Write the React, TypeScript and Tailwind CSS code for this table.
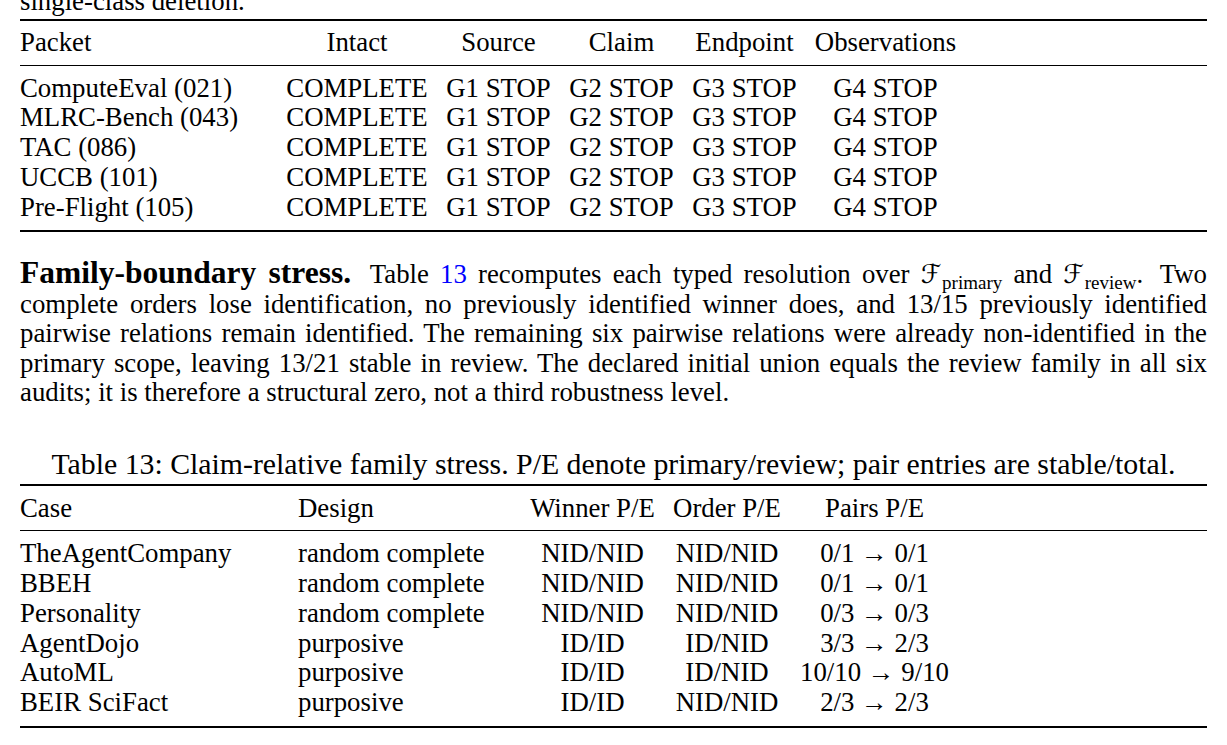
import React from "react";

const t1Cols = "grid grid-cols-[257px_160px_123px_123px_123px_159px_1fr]";
const t2Cols = "grid grid-cols-[278px_223px_143px_126px_169px_1fr]";

const t1Rows = [
  "ComputeEval (021)",
  "MLRC-Bench (043)",
  "TAC (086)",
  "UCCB (101)",
  "Pre-Flight (105)",
];

const t2Rows: [string, string, string, string, string][] = [
  ["TheAgentCompany", "random complete", "NID/NID", "NID/NID", "0/1 \u2192 0/1"],
  ["BBEH", "random complete", "NID/NID", "NID/NID", "0/1 \u2192 0/1"],
  ["Personality", "random complete", "NID/NID", "NID/NID", "0/3 \u2192 0/3"],
  ["AgentDojo", "purposive", "ID/ID", "ID/NID", "3/3 \u2192 2/3"],
  ["AutoML", "purposive", "ID/ID", "ID/NID", "10/10 \u2192 9/10"],
  ["BEIR SciFact", "purposive", "ID/ID", "NID/NID", "2/3 \u2192 2/3"],
];

function Heavy({ className = "" }: { className?: string }) {
  return <div className={"h-[2px] bg-black " + className} />;
}
function Light({ className = "" }: { className?: string }) {
  return <div className={"h-[1px] bg-black " + className} />;
}

function CalF({ sub }: { sub: string }) {
  return (
    <span className="whitespace-nowrap">
      <span className="font-['DejaVu_Serif','DejaVu_Sans',serif] italic text-[26px] leading-[0] pr-[1px]">{"\u2131"}</span>
      <span className="align-sub text-[19px] leading-[0]">{sub}</span>
    </span>
  );
}

const J = "text-justify [text-align-last:justify] whitespace-nowrap h-[29.5px]";

export default function App() {
  return (
    <div className="w-[1227px] h-[745px] overflow-hidden bg-white text-black font-['Liberation_Serif','Times_New_Roman',serif] text-[26.8px] leading-[29.75px]">
      <div className="px-[20px]">
        <div className="-mt-[13px]">single-class deletion.</div>

        {/* Table 12 */}
        <Heavy className="mt-[2px]" />
        <div className={t1Cols + " mt-[7px]"}>
          <div>Packet</div>
          <div className="text-center">Intact</div>
          <div className="text-center">Source</div>
          <div className="text-center">Claim</div>
          <div className="text-center">Endpoint</div>
          <div className="text-center">Observations</div>
          <div />
        </div>
        <Light className="mt-[7px]" />
        <div className="mt-[8px]">
          {t1Rows.map((r) => (
            <div key={r} className={t1Cols}>
              <div>{r}</div>
              <div className="text-center">COMPLETE</div>
              <div className="text-center">G1 STOP</div>
              <div className="text-center">G2 STOP</div>
              <div className="text-center">G3 STOP</div>
              <div className="text-center">G4 STOP</div>
              <div />
            </div>
          ))}
        </div>
        <Heavy className="mt-[8px]" />

        {/* Paragraph */}
        <div className="mt-[28px] leading-[29.5px]">
          <div className={J}>
            <span className="font-bold text-[31.5px] leading-[0]">Family-boundary stress.</span>
            <span className="inline-block w-[8px]" /> Table <span className="text-[#0000ff]">13</span> recomputes each typed resolution over{" "}
            <CalF sub="primary" /> and <CalF sub="review" />.<span className="inline-block w-[6px]" /> Two
          </div>
          <div className={J}>
            complete orders lose identification, no previously identified winner does, and 13/15 previously identified
          </div>
          <div className={J}>
            pairwise relations remain identified. The remaining six pairwise relations were already non-identified in the
          </div>
          <div className={J}>
            primary scope, leaving 13/21 stable in review. The declared initial union equals the review family in all six
          </div>
          <div className="h-[29.5px]">audits; it is therefore a structural zero, not a third robustness level.</div>
        </div>

        {/* Caption */}
        <div className="mt-[41px] text-center text-[29.8px] leading-[29.75px] whitespace-nowrap">
          Table 13: Claim-relative family stress. P/E denote primary/review; pair entries are stable/total.
        </div>

        {/* Table 13 */}
        <Heavy className="mt-[5px]" />
        <div className={t2Cols + " mt-[8px]"}>
          <div>Case</div>
          <div>Design</div>
          <div className="text-center">Winner P/E</div>
          <div className="text-center">Order P/E</div>
          <div className="text-center">Pairs P/E</div>
          <div />
        </div>
        <Light className="mt-[7px]" />
        <div className="mt-[8px]">
          {t2Rows.map((r) => (
            <div key={r[0]} className={t2Cols}>
              <div>{r[0]}</div>
              <div>{r[1]}</div>
              <div className="text-center">{r[2]}</div>
              <div className="text-center">{r[3]}</div>
              <div className="text-center whitespace-nowrap">{r[4]}</div>
              <div />
            </div>
          ))}
        </div>
        <Heavy className="mt-[8px]" />
      </div>
    </div>
  );
}
